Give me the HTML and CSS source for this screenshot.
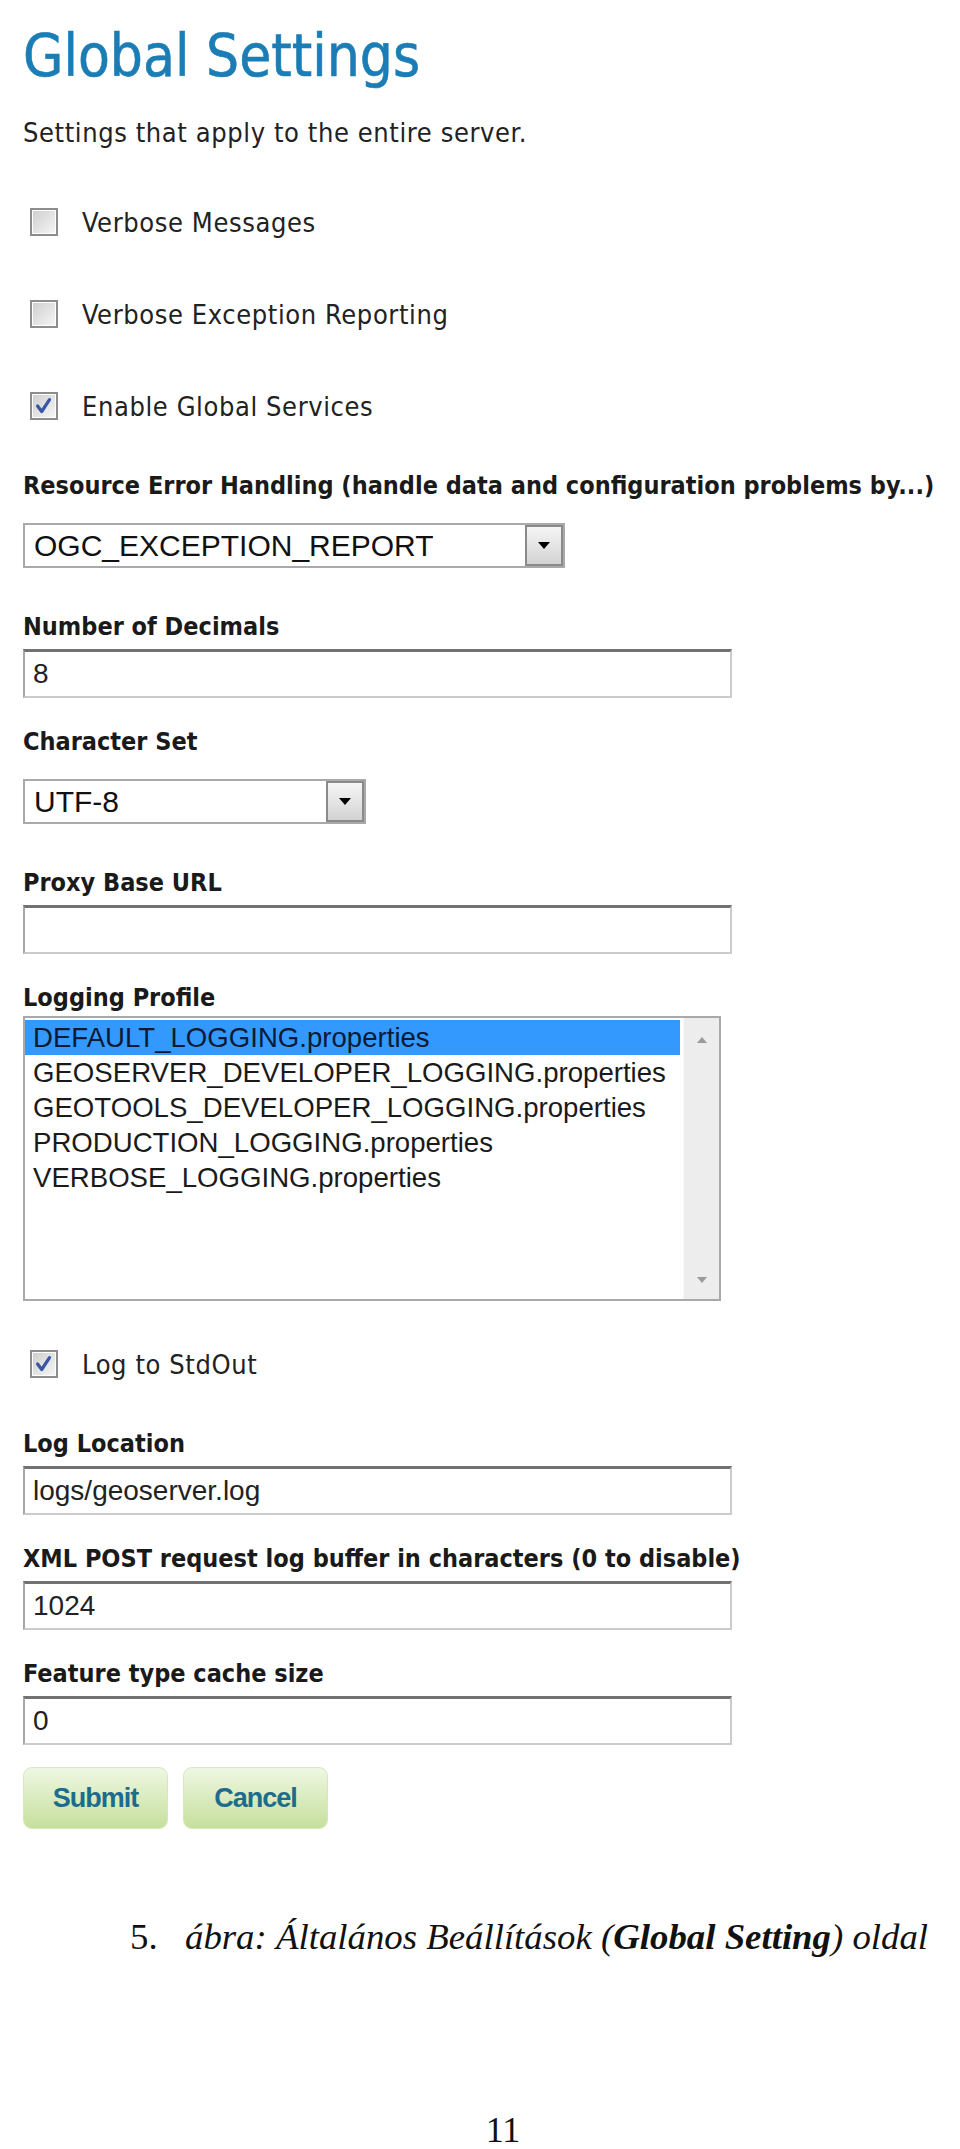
FILE: index.html
```html
<!DOCTYPE html>
<html lang="hu">
<head>
  <meta charset="UTF-8">
  <meta name="viewport" content="width=device-width, initial-scale=1.0">
  <title>Global Settings</title>
  <link rel="stylesheet" href="styles.css">
</head>
<body>
  <div class="page">
    <h1>Global Settings</h1>
    <p class="intro">Settings that apply to the entire server.</p>

    <label class="check first"><span class="box"></span>Verbose Messages</label>
    <label class="check"><span class="box"></span>Verbose Exception Reporting</label>
    <label class="check"><span class="box"><svg viewBox="0 0 24 24"><path d="M5 12 L9.5 18 L18 5"/></svg></span>Enable Global Services</label>

    <div class="field after-check">
      <span class="label">Resource Error Handling (handle data and configuration problems by...)</span>
      <div class="select wide"><span class="value">OGC_EXCEPTION_REPORT</span><span class="drop"><i></i></span></div>
    </div>

    <div class="field">
      <span class="label">Number of Decimals</span>
      <input class="text-input" type="text" value="8">
    </div>

    <div class="field">
      <span class="label">Character Set</span>
      <div class="select narrow"><span class="value">UTF-8</span><span class="drop"><i></i></span></div>
    </div>

    <div class="field">
      <span class="label">Proxy Base URL</span>
      <input class="text-input" type="text" value="">
    </div>

    <div class="field">
      <span class="label">Logging Profile</span>
      <div class="listbox">
        <div class="items">
          <div class="item selected">DEFAULT_LOGGING.properties</div>
          <div class="item">GEOSERVER_DEVELOPER_LOGGING.properties</div>
          <div class="item">GEOTOOLS_DEVELOPER_LOGGING.properties</div>
          <div class="item">PRODUCTION_LOGGING.properties</div>
          <div class="item">VERBOSE_LOGGING.properties</div>
        </div>
        <div class="scrollbar"><i class="up"></i><i class="down"></i></div>
      </div>
    </div>

    <label class="check after-list"><span class="box"><svg viewBox="0 0 24 24"><path d="M5 12 L9.5 18 L18 5"/></svg></span>Log to StdOut</label>

    <div class="field after-check">
      <span class="label">Log Location</span>
      <input class="text-input" type="text" value="logs/geoserver.log">
    </div>

    <div class="field">
      <span class="label">XML POST request log buffer in characters (0 to disable)</span>
      <input class="text-input" type="text" value="1024">
    </div>

    <div class="field">
      <span class="label">Feature type cache size</span>
      <input class="text-input" type="text" value="0">
    </div>

    <div class="buttons">
      <button class="btn">Submit</button>
      <button class="btn">Cancel</button>
    </div>

    <p class="caption"><span class="num">5.</span>ábra: Általános Beállítások (<b>Global Setting</b>) oldal</p>
    <p class="page-no">11</p>
  </div>
</body>
</html>
```

FILE: styles.css
```css
* { box-sizing: border-box; }
body { margin: 0; background: #fff; font-family: "DejaVu Sans", sans-serif; font-stretch: semi-condensed; }
.page { padding: 27px 0 0 23px; }

h1 { margin: 0; font-size: 58px; line-height: 58px; font-weight: normal; color: #1b7db5; -webkit-text-stroke: 0.6px #1b7db5; }
.intro { margin: 35px 0 0; font-size: 27px; line-height: 25px; letter-spacing: 0.6px; color: #222; }

.check {
  display: flex;
  align-items: center;
  height: 28px;
  margin: 64px 0 0 7px;
  font-size: 27px;
  letter-spacing: 0.6px;
  color: #222;
}
.check.first { margin-top: 63px; }
.check.after-list { margin-top: 49px; }
.box {
  flex: none;
  display: flex;
  align-items: center;
  justify-content: center;
  width: 28px;
  height: 28px;
  margin-right: 24px;
  border: 2px solid #8d8d8d;
  background: linear-gradient(135deg, #cdcdcd, #f7f7f7);
  box-shadow: inset 0 0 0 1px #fff;
}
.box svg { width: 22px; height: 22px; }
.box path { fill: none; stroke: #3a55a6; stroke-width: 3.5; stroke-linecap: round; stroke-linejoin: round; }

.field { display: flow-root; margin-top: 31px; }
.field.after-check { margin-top: 53px; }
.label { display: block; font-size: 25px; line-height: 26px; font-weight: bold; color: #1a1a1a; }

.text-input {
  display: block;
  width: 709px;
  height: 49px;
  margin-top: 9px;
  padding: 0 8px;
  border: 2px solid #cbcbcb;
  border-top: 3px solid #727272;
  border-left-color: #a8a8a8;
  font: 28px "Liberation Sans", Arial, sans-serif;
  color: #222;
  background: #fff;
}

.select {
  display: flex;
  height: 45px;
  margin: 24px 0 15px;
  border: 2px solid #a9a9a9;
  background: #fff;
}
.select.wide { width: 542px; }
.select.narrow { width: 343px; }
.select .value { flex: 1; padding-left: 9px; font: 30px/41px "Liberation Sans", Arial, sans-serif; color: #111; }
.select .drop {
  display: flex;
  align-items: center;
  justify-content: center;
  width: 38px;
  border: 2px solid #8a8a8a;
  background: linear-gradient(#f6f6f6, #d3d3d3);
}
.select .drop i { width: 0; height: 0; border-left: 6px solid transparent; border-right: 6px solid transparent; border-top: 7px solid #000; }

.listbox {
  display: flex;
  width: 698px;
  height: 285px;
  margin-top: 5px;
  border: 2px solid #a9a9a9;
  background: #fff;
}
.items { flex: 1; padding: 2px 3px 0 0; font: 27.6px/35px "Liberation Sans", Arial, sans-serif; color: #1a1a1a; }
.item { padding-left: 8px; white-space: nowrap; }
.item.selected { background: #3399ff; color: #0d1a33; }
.scrollbar {
  display: flex;
  flex-direction: column;
  justify-content: space-between;
  align-items: center;
  width: 36px;
  padding: 19px 0 16px;
  background: #ededed;
  border-left: 1px solid #f8f8f8;
}
.scrollbar i { width: 0; height: 0; border-left: 5px solid transparent; border-right: 5px solid transparent; }
.scrollbar .up { border-bottom: 6px solid #9a9a9a; }
.scrollbar .down { border-top: 6px solid #9a9a9a; }

.buttons { display: flex; gap: 15px; margin-top: 22px; }
.btn {
  width: 145px;
  height: 62px;
  border: 1px solid #d6e7bf;
  border-radius: 9px;
  background: linear-gradient(#eff7e2, #c5e09c);
  font: bold 27px "Liberation Sans", Arial, sans-serif;
  letter-spacing: -1px;
  color: #1d6c8d;
}

.caption {
  margin: 90px 0 0 107px;
  font: italic 36.8px/36px "Liberation Serif", "Times New Roman", serif;
  color: #111;
}
.caption .num { display: inline-block; width: 55px; font-style: normal; }
.page-no {
  margin: 157px 0 0;
  padding-left: 23px;
  text-align: center;
  font: 36px/36px "Liberation Serif", "Times New Roman", serif;
  color: #111;
}
```
